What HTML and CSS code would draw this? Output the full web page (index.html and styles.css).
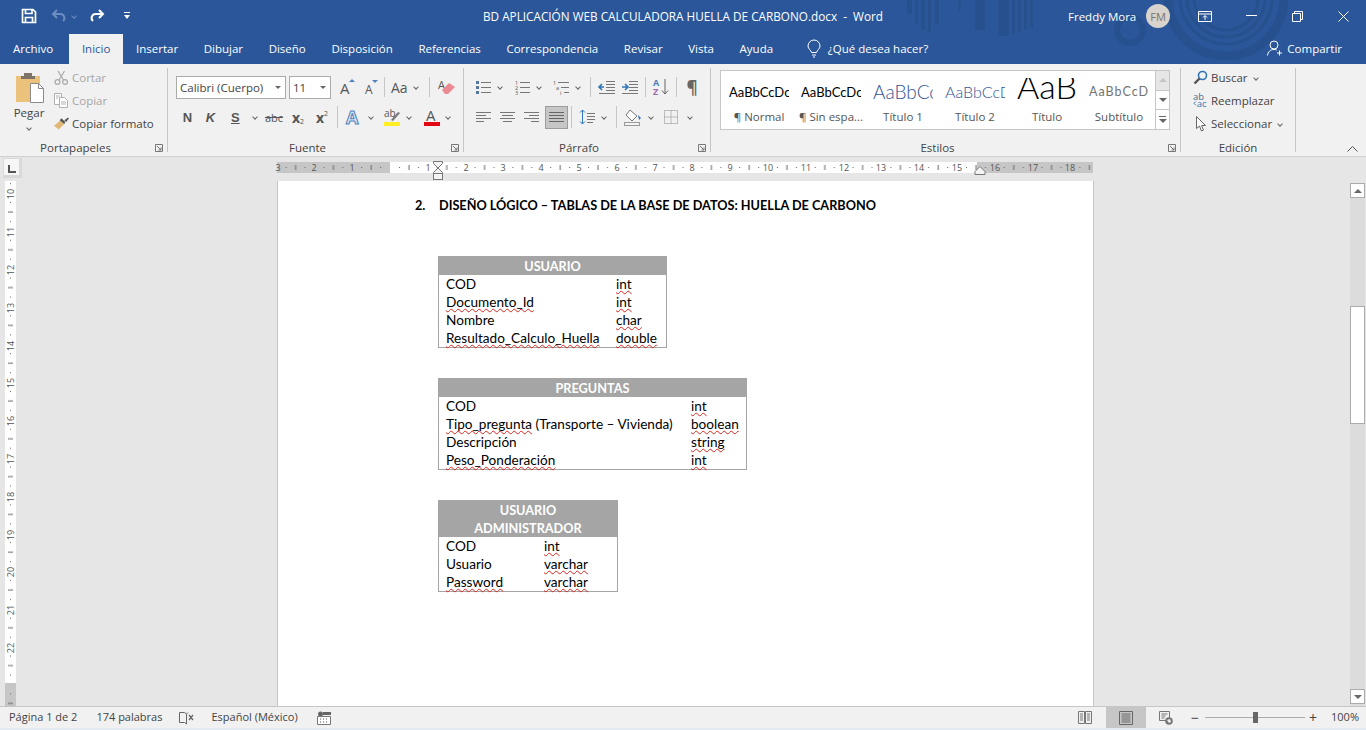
FILE: index.html
```html
<!DOCTYPE html>
<html lang="es">
<head>
  <meta charset="UTF-8" />
  <title>BD APLICACIÓN WEB CALCULADORA HUELLA DE CARBONO.docx - Word</title>
  <link rel="stylesheet" href="styles.css">
</head>
<body>
  <!-- franja azul: barra de titulo y pestañas -->
  <div class="cabecera">
    <svg class="adorno" width="1366" height="64" viewBox="0 0 1366 64">
      <g fill="#27508f">
        <rect x="907" y="0" width="5" height="14"/><rect x="915" y="0" width="3" height="24"/><rect x="921" y="0" width="4" height="30"/><rect x="928" y="0" width="3" height="32"/><rect x="935" y="0" width="4" height="24"/>
        <rect x="958" y="0" width="3" height="10"/><rect x="975" y="0" width="10" height="30"/><rect x="998" y="0" width="11" height="36"/><rect x="1012" y="0" width="3" height="34"/><rect x="1018" y="0" width="3" height="32"/><rect x="1024" y="0" width="3" height="30"/><rect x="1030" y="0" width="3" height="28"/>
      </g>
      <g fill="none" stroke="#27508f">
        <circle cx="1130" cy="30" r="13" stroke-width="6"/>
        <circle cx="1226" cy="-2" r="58" stroke-width="9"/>
        <circle cx="1226" cy="-2" r="46" stroke-width="3"/>
        <circle cx="1226" cy="-2" r="39" stroke-width="3"/>
        <circle cx="1226" cy="-2" r="32" stroke-width="3"/>
      </g>
    </svg>

    <div class="barra-titulo">
      <div class="acceso">
        <svg class="ic-guardar" width="16" height="16" viewBox="0 0 16 16" fill="none" stroke="#fff" stroke-width="1.7"><path d="M1.5 1.5h10.5l2.5 2.5v10.5h-13z"/><path d="M4.5 1.5v4h6.5v-4M4.5 14.5v-5h7v5"/></svg>
        <svg class="ic-deshacer" width="16" height="14" viewBox="0 0 16 14" fill="none" stroke="#6c8dbf" stroke-width="2"><path d="M6 1 2 5l4 4M2 5h7a4 4 0 0 1 3 7"/></svg>
        <span class="caret caret-tenue"></span>
        <svg class="ic-rehacer" width="16" height="14" viewBox="0 0 16 14" fill="none" stroke="#fff" stroke-width="2"><path d="M10 1l4 4-4 4M14 5H7a4 4 0 0 0-3 7"/></svg>
        <svg class="ic-personalizar" width="6" height="8" viewBox="0 0 6 8" fill="#fff"><rect y="0" width="6" height="1"/><path d="M0 3h6L3 7z"/></svg>
      </div>
      <div class="titulo">BD APLICACIÓN WEB CALCULADORA HUELLA DE CARBONO.docx&nbsp; -&nbsp; Word</div>
      <div class="ventana">
        <span class="usuario">Freddy Mora</span>
        <span class="avatar">FM</span>
        <svg class="ic-pantalla" width="14" height="11" viewBox="0 0 14 11" fill="none" stroke="#fff"><path d="M.5.5h13v10H.5zM.5 3h13"/><path d="M7 9V5M5 6.5l2-2 2 2"/></svg>
        <svg class="ic-min" width="11" height="2" viewBox="0 0 11 2"><rect width="11" height="1" fill="#fff"/></svg>
        <svg class="ic-res" width="11" height="11" viewBox="0 0 11 11" fill="none" stroke="#fff"><path d="M.5 2.5h8v8h-8zM2.5 2.5v-2h8v8h-2"/></svg>
        <svg class="ic-cerrar" width="11" height="11" viewBox="0 0 11 11" stroke="#fff"><path d="M.5.5l10 10M10.5.5l-10 10"/></svg>
      </div>
    </div>

    <div class="pestanas">
      <span class="pestana archivo">Archivo</span>
      <span class="pestana activa">Inicio</span>
      <span class="pestana">Insertar</span>
      <span class="pestana">Dibujar</span>
      <span class="pestana">Diseño</span>
      <span class="pestana">Disposición</span>
      <span class="pestana">Referencias</span>
      <span class="pestana">Correspondencia</span>
      <span class="pestana">Revisar</span>
      <span class="pestana">Vista</span>
      <span class="pestana">Ayuda</span>
      <svg class="ic-foco" width="14" height="18" viewBox="0 0 14 18" fill="none" stroke="#fff"><path d="M4.500 12.500C4 10 1 9 1 6a6 6 0 0 1 12 0c0 3-3 4-3.500 6.500zM5 15h4M6 17h2"/></svg>
      <span class="buscar-ayuda">¿Qué desea hacer?</span>
      <span class="compartir">
        <svg width="16" height="16" viewBox="0 0 16 16" fill="none" stroke="#fff"><circle cx="7" cy="5" r="4"/><path d="M.5 15.500c.5-4 3-6 6.500-6 1 0 2 .2 2.800.6M12.500 10.500v5M10 13h5"/></svg>
        Compartir
      </span>
    </div>
  </div>

  <!-- cinta de opciones -->
  <div class="cinta">
    <section class="grupo g-portapapeles">
      <div class="cuerpo portapapeles">
        <div class="pegar">
          <svg width="30" height="32" viewBox="0 0 30 32"><rect x="0" y="4" width="24" height="26" fill="#eac27b"/><path d="M8 4V1h8v3h3v3H5V4z" fill="#7d7466"/><path d="M14.500 11.500h8l5 5v14h-13z" fill="#fff" stroke="#8a8a8a"/><path d="M22.500 11.500v5h5" fill="none" stroke="#8a8a8a"/></svg>
          <span class="pegar-txt">Pegar</span>
          <span class="caret"></span>
        </div>
        <div class="acciones">
          <div class="accion inactiva">
            <svg width="15" height="15" viewBox="0 0 14 15" fill="none" stroke="#a9a9a9" stroke-width="1.200"><circle cx="3" cy="12" r="2.400"/><circle cx="10.500" cy="12" r="2.400"/><path d="M4.500 10 10 1M9 10 3.500 1"/></svg>
            Cortar
          </div>
          <div class="accion inactiva">
            <svg width="15" height="15" viewBox="0 0 15 15" fill="#fff" stroke="#b0b0b0"><path d="M.5.5h7v11h-7z"/><path d="M5.500 4.500h5l3 3v7h-8z"/><path d="M2 3h4M2 5h2M7 9h5M7 11h5" fill="none"/></svg>
            Copiar
          </div>
          <div class="accion">
            <svg width="15" height="15" viewBox="0 0 16 15"><path d="M0 10 7 4l4 4-6 6z" fill="#e2b878"/><path d="M6 4l2-2 4 4-1 2z" fill="#555"/><path d="M11 4l4-3 1 1-3 4z" fill="#555"/></svg>
            Copiar formato
          </div>
        </div>
      </div>
      <div class="rotulo con-lanzador">Portapapeles<svg class="lanzador" width="8" height="8" viewBox="0 0 8 8" fill="none" stroke="#777"><path d="M.5 7.500v-7h7v7zM2 2l4 4M6 3.500V6H3.500"/></svg></div>
    </section>

    <section class="grupo g-fuente">
      <div class="cuerpo filas">
        <div class="fila">
          <div class="combo c-fuente"><span>Calibri (Cuerpo)</span><i class="flecha"></i></div>
          <div class="combo c-tamano"><span>11</span><i class="flecha"></i></div>
          <svg class="b-26" width="26" height="20" viewBox="0 0 26 20"><text x="2" y="17" class="t-a" font-size="15">A</text><path d="M11 5h6l-3-3z" fill="#4f81bd"/></svg>
          <svg class="b-16" width="16" height="20" viewBox="0 0 16 20"><text x="1" y="17" class="t-a" font-size="12">A</text><path d="M8 3h6l-3 3z" fill="#4f81bd"/></svg>
          <i class="sep"></i>
          <div class="b b-36 aa"><span>Aa</span><span class="caret"></span></div>
          <i class="sep"></i>
          <svg class="b-25" width="25" height="20" viewBox="0 0 25 20"><text x="4" y="12" class="t-a" font-size="11">A</text><path d="M8 13l7-7 6 4-7 7h-3z" fill="#ec8a91"/></svg>
        </div>
        <div class="fila fila-2">
          <span class="b b-23 n">N</span>
          <span class="b b-23 k">K</span>
          <span class="b b-40 s"><u>S</u><span class="caret"></span></span>
          <span class="b b-24 tachado">abc</span>
          <span class="b b-24 indice">x<sub>2</sub></span>
          <span class="b b-24 indice">x<sup>2</sup></span>
          <i class="sep sep-n"></i>
          <span class="b b-36">
            <svg width="18" height="18" viewBox="0 0 18 18"><text x="1" y="16" class="t-fx">A</text></svg>
            <span class="caret"></span>
          </span>
          <span class="b b-40">
            <svg width="18" height="18" viewBox="0 0 18 18"><text x="1" y="9" class="t-a" font-size="10">ab</text><path d="M8 12l7-8 2 1-7 8z" fill="#777"/><rect x="1" y="14" width="16" height="4" fill="#ffee22"/></svg>
            <span class="caret"></span>
          </span>
          <span class="b b-39">
            <svg width="16" height="18" viewBox="0 0 16 18"><text x="2" y="13" class="t-a" font-size="15">A</text><rect x="0" y="14" width="16" height="4" fill="#e30613"/></svg>
            <span class="caret"></span>
          </span>
        </div>
      </div>
      <div class="rotulo con-lanzador">Fuente<svg class="lanzador" width="8" height="8" viewBox="0 0 8 8" fill="none" stroke="#777"><path d="M.5 7.500v-7h7v7zM2 2l4 4M6 3.500V6H3.500"/></svg></div>
    </section>

    <section class="grupo g-parrafo">
      <div class="cuerpo filas">
        <div class="fila fila-par">
          <span class="ip b-39">
            <svg width="15" height="15" viewBox="0 0 15 15"><path d="M5 2.500h10M5 7.500h10M5 12.500h10" stroke="#777"/><path d="M0 1h3v3H0zM0 6h3v3H0zM0 11h3v3H0z" fill="#56779e"/></svg>
            <span class="caret"></span>
          </span>
          <span class="ip b-38">
            <svg width="15" height="15" viewBox="0 0 15 15"><path d="M5 2.500h10M5 7.500h10M5 12.500h10" stroke="#777"/><text x="0" y="5" class="t-num">1</text><text x="0" y="10" class="t-num">2</text><text x="0" y="15" class="t-num">3</text></svg>
            <span class="caret"></span>
          </span>
          <span class="ip b-36">
            <svg width="16" height="15" viewBox="0 0 16 15"><path d="M5 2.500h11M8 7.500h8M11 12.500h5" stroke="#777"/><text x="0" y="5" class="t-num">1</text><text x="3" y="10" class="t-num">a</text><text x="7" y="15" class="t-num">i</text></svg>
            <span class="caret"></span>
          </span>
          <i class="sep"></i>
          <svg class="sangria" width="17" height="15" viewBox="0 0 17 15" fill="none" stroke="#777"><path d="M8 1.500h9M8 4.500h9M8 7.500h9M8 10.500h9M1 13.500h16"/><path d="M6 7H1M4 4 1 7l3 3" stroke="#2e75b6" stroke-width="1.600"/></svg>
          <svg class="sangria" width="17" height="15" viewBox="0 0 17 15" fill="none" stroke="#777"><path d="M8 1.500h9M8 4.500h9M8 7.500h9M8 10.500h9M1 13.500h16"/><path d="M1 7h5M4 4l3 3-3 3" stroke="#2e75b6" stroke-width="1.600"/></svg>
          <i class="sep"></i>
          <svg class="orden" width="16" height="18" viewBox="0 0 16 18"><text x="0" y="8" class="t-az" fill="#4f81bd">A</text><text x="0" y="17" class="t-az" fill="#a26ab0">Z</text><path d="M12 1v15M9 12.500l3 3.500 3-3.500" fill="none" stroke="#666"/></svg>
          <i class="sep"></i>
          <span class="b b-24 calderon">¶</span>
        </div>
        <div class="fila fila-par fila-2 fila-alinear">
          <svg class="al" width="15" height="10" viewBox="0 0 15 10" stroke="#777"><path d="M0 .5h15M0 3.500h10M0 6.500h15M0 9.500h8"/></svg>
          <svg class="al" width="15" height="10" viewBox="0 0 15 10" stroke="#777"><path d="M0 .5h15M2 3.500h11M0 6.500h15M3 9.500h9"/></svg>
          <svg class="al al-ult" width="15" height="10" viewBox="0 0 15 10" stroke="#777"><path d="M0 .5h15M5 3.500h10M0 6.500h15M7 9.500h8"/></svg>
          <span class="b activo">
            <svg width="15" height="10" viewBox="0 0 15 10" stroke="#666"><path d="M0 .5h15M0 3.500h15M0 6.500h15M0 9.500h15"/></svg>
          </span>
          <i class="sep sep-n"></i>
          <span class="ip ip-4 b-38">
            <svg width="16" height="16" viewBox="0 0 16 16" fill="none"><path d="M8 4.500h8M8 7.500h8M8 10.500h8M8 13.500h6" stroke="#777"/><path d="M3.500 1v14M1 3.500 3.500 1 6 3.500M1 12.500 3.500 15 6 12.500" stroke="#2e75b6"/></svg>
            <span class="caret"></span>
          </span>
          <i class="sep sep-n"></i>
          <span class="ip ip-4 b-40">
            <svg width="18" height="17" viewBox="0 0 18 17"><path d="M6 1l7 6-5 5-6-6z" fill="#fff" stroke="#777"/><path d="M14 6l3 3-2 2z" fill="#2e75b6"/><rect x=".5" y="13.500" width="15" height="3" fill="#f4f4f4" stroke="#999"/></svg>
            <span class="caret"></span>
          </span>
          <span class="ip ip-4 ip-ancho b-36">
            <svg width="14" height="14" viewBox="0 0 14 14" fill="none" stroke="#888" stroke-dasharray="1 1"><path d="M.5.500h13v13H.5zM7 .5v13M.5 7h13"/></svg>
            <span class="caret"></span>
          </span>
        </div>
      </div>
      <div class="rotulo con-lanzador">Párrafo<svg class="lanzador" width="8" height="8" viewBox="0 0 8 8" fill="none" stroke="#777"><path d="M.5 7.500v-7h7v7zM2 2l4 4M6 3.500V6H3.500"/></svg></div>
    </section>

    <section class="grupo g-estilos">
      <div class="cuerpo">
        <div class="galeria">
          <div class="estilo"><div class="muestra m-normal">AaBbCcDc</div><div class="nombre">¶ Normal</div></div>
          <div class="estilo"><div class="muestra m-normal">AaBbCcDc</div><div class="nombre">¶ Sin espa...</div></div>
          <div class="estilo"><div class="muestra m-t1">AaBbCc</div><div class="nombre">Título 1</div></div>
          <div class="estilo"><div class="muestra m-t2">AaBbCcD</div><div class="nombre">Título 2</div></div>
          <div class="estilo"><div class="muestra m-titulo">AaB</div><div class="nombre">Título</div></div>
          <div class="estilo"><div class="muestra m-sub">AaBbCcD</div><div class="nombre">Subtítulo</div></div>
          <div class="galeria-scroll">
            <span class="gs gs-off"><i class="tri-arr"></i></span>
            <span class="gs"><i class="tri-aba"></i></span>
            <span class="gs gs-mas"><i class="raya"></i><i class="tri-aba"></i></span>
          </div>
        </div>
      </div>
      <div class="rotulo con-lanzador">Estilos<svg class="lanzador" width="8" height="8" viewBox="0 0 8 8" fill="none" stroke="#777"><path d="M.5 7.500v-7h7v7zM2 2l4 4M6 3.500V6H3.500"/></svg></div>
    </section>

    <section class="grupo g-edicion">
      <div class="cuerpo acciones acciones-ed">
        <div class="accion">
          <svg width="15" height="15" viewBox="0 0 15 15" fill="none"><circle cx="9.500" cy="5.500" r="4" stroke="#2e75b6" stroke-width="1.600"/><path d="M6.500 8.500l-5 5" stroke="#555" stroke-width="2.400"/></svg>
          Buscar<span class="caret caret-buscar"></span>
        </div>
        <div class="accion">
          <svg width="15" height="15" viewBox="0 0 16 16"><text x="0" y="7" class="t-rem">ab</text><text x="4" y="15" class="t-rem t-azul">ac</text><path d="M3 9 1 11l2 2" fill="none" stroke="#2e75b6"/></svg>
          Reemplazar
        </div>
        <div class="accion">
          <svg width="15" height="16" viewBox="0 0 15 16" fill="#fff" stroke="#666"><path d="M3.500.5v12l3-2.500 2 5 2-1-2-4.500h4z"/></svg>
          Seleccionar<span class="caret"></span>
        </div>
      </div>
      <div class="rotulo">Edición</div>
    </section>

    <svg class="contraer" width="11" height="6" viewBox="0 0 11 6" fill="none" stroke="#555"><path d="M.5 5.500l5-5 5 5"/></svg>
  </div>

  <!-- area de trabajo -->
  <div class="trabajo">
    <div class="esquina"><span class="tab-l"></span></div>

    <svg class="regla-h" width="817" height="24" viewBox="0 0 817 24">
      <defs>
        <pattern id="marcas-h" width="37.8" height="24" patternUnits="userSpaceOnUse" patternTransform="translate(113 0)">
          <rect x="9" y="10" width="1" height="1" fill="#666"/>
          <rect x="18.500" y="8" width="1" height="5" fill="#666"/>
          <rect x="28" y="10" width="1" height="1" fill="#666"/>
        </pattern>
      </defs>
      <rect x="0" y="5" width="113" height="11" fill="#c6c6c6"/>
      <rect x="113" y="5" width="587" height="11" fill="#fff"/>
      <rect x="700" y="5" width="116" height="11" fill="#c6c6c6"/>
      <rect x="0" y="5" width="816" height="11" fill="url(#marcas-h)"/>
      <g class="t-regla" text-anchor="middle">
        <text x="1" y="14">3</text><text x="37" y="14">2</text><text x="75" y="14">1</text>
        <text x="151" y="14">1</text><text x="189" y="14">2</text><text x="226" y="14">3</text><text x="264" y="14">4</text><text x="302" y="14">5</text><text x="340" y="14">6</text><text x="378" y="14">7</text><text x="415" y="14">8</text><text x="453" y="14">9</text><text x="491" y="14">10</text><text x="529" y="14">11</text><text x="567" y="14">12</text><text x="604" y="14">13</text><text x="642" y="14">14</text><text x="680" y="14">15</text><text x="718" y="14">16</text><text x="756" y="14">17</text><text x="793" y="14">18</text>
      </g>
      <g fill="#f4f4f4" stroke="#777">
        <path d="M156.500 4.500h9v2l-4.500 4.500-4.500-4.500z"/>
        <path d="M161 11l4.500 4.500v1h-9v-1z"/>
        <rect x="156.500" y="16.500" width="9" height="6"/>
        <path d="M698 17.500v-3l5-5 5 5v3z"/>
      </g>
    </svg>

    <div class="lado">
      <svg class="regla-v" width="11" height="525" viewBox="0 0 11 525">
        <defs>
          <pattern id="marcas-v" width="11" height="37.8" patternUnits="userSpaceOnUse" patternTransform="translate(0 12)">
            <rect x="5" y="9" width="1" height="1" fill="#666"/>
            <rect x="3" y="18.500" width="5" height="1" fill="#666"/>
            <rect x="5" y="28" width="1" height="1" fill="#666"/>
          </pattern>
        </defs>
        <rect width="11" height="502" fill="#fff"/>
        <rect y="502" width="11" height="23" fill="#c6c6c6"/>
        <rect width="11" height="525" fill="url(#marcas-v)"/>
        <g class="t-regla" text-anchor="middle">
          <text transform="translate(9 13) rotate(-90)">10</text>
          <text transform="translate(9 51) rotate(-90)">11</text>
          <text transform="translate(9 89) rotate(-90)">12</text>
          <text transform="translate(9 127) rotate(-90)">13</text>
          <text transform="translate(9 165) rotate(-90)">14</text>
          <text transform="translate(9 202) rotate(-90)">15</text>
          <text transform="translate(9 240) rotate(-90)">16</text>
          <text transform="translate(9 278) rotate(-90)">17</text>
          <text transform="translate(9 316) rotate(-90)">18</text>
          <text transform="translate(9 354) rotate(-90)">19</text>
          <text transform="translate(9 391) rotate(-90)">20</text>
          <text transform="translate(9 429) rotate(-90)">21</text>
          <text transform="translate(9 467) rotate(-90)">22</text>
        </g>
      </svg>
    </div>

    <div class="pagina">
      <h2 class="doc-titulo"><span class="doc-num">2.</span>DISEÑO LÓGICO – TABLAS DE LA BASE DE DATOS: HUELLA DE CARBONO</h2>

      <table class="tabla t-usuario">
        <colgroup><col class="col-a"><col></colgroup>
        <tr><th colspan="2">USUARIO</th></tr>
        <tr><td>COD</td><td><span class="err">int</span></td></tr>
        <tr><td><span class="err">Documento_Id</span></td><td><span class="err">int</span></td></tr>
        <tr><td>Nombre</td><td><span class="err">char</span></td></tr>
        <tr><td><span class="err">Resultado_Calculo_Huella</span></td><td><span class="err">double</span></td></tr>
      </table>

      <table class="tabla t-preguntas">
        <colgroup><col class="col-a"><col></colgroup>
        <tr><th colspan="2">PREGUNTAS</th></tr>
        <tr><td>COD</td><td><span class="err">int</span></td></tr>
        <tr><td><span class="err">Tipo_pregunta</span> (Transporte – Vivienda)</td><td><span class="err">boolean</span></td></tr>
        <tr><td>Descripción</td><td><span class="err">string</span></td></tr>
        <tr><td><span class="err">Peso_Ponderación</span></td><td><span class="err">int</span></td></tr>
      </table>

      <table class="tabla t-admin">
        <colgroup><col class="col-a"><col></colgroup>
        <tr><th colspan="2">USUARIO<br>ADMINISTRADOR</th></tr>
        <tr><td>COD</td><td><span class="err">int</span></td></tr>
        <tr><td>Usuario</td><td><span class="err">varchar</span></td></tr>
        <tr><td><span class="err">Password</span></td><td><span class="err">varchar</span></td></tr>
      </table>
    </div>

    <div class="vacio"></div>

    <div class="scroll">
      <span class="scroll-btn"><i class="tri-arr"></i></span>
      <span class="scroll-arriba"></span>
      <span class="scroll-pulgar"></span>
      <span class="scroll-abajo"></span>
      <span class="scroll-btn"><i class="tri-aba"></i></span>
    </div>
  </div>

  <!-- barra de estado -->
  <div class="estado">
    <span class="e-pagina">Página 1 de 2</span>
    <span class="e-palabras">174 palabras</span>
    <svg class="e-libro" width="15" height="14" viewBox="0 0 15 14" fill="none" stroke="#666"><path d="M.5 1.500h5l2 1.500v10l-2-1.500h-5zM7.500 3l1.500-1.500"/><path d="M10 4l4 5M14 4l-4 5" stroke-width="1.300"/></svg>
    <span class="e-idioma">Español (México)</span>
    <svg class="e-macro" width="14" height="14" viewBox="0 0 14 14"><circle cx="3.500" cy="3" r="2.500" fill="#666"/><rect x="6" y="1" width="8" height="3" fill="#666"/><path d="M.5 5.500h13v8H.5z" fill="#fff" stroke="#777"/><path d="M3 8h1M6 8h1M9 8h1M3 11h1M6 11h1M9 11h1" stroke="#555"/></svg>
    <span class="e-derecha">
      <svg class="e-lectura" width="14" height="14" viewBox="0 0 14 14" fill="none" stroke="#777"><path d="M.5.500h6v12h-6zM7.500.500h6v12h-6zM2 3h3M2 5h3M2 7h3M2 9h3M9 3h3M9 5h3M9 7h3M9 9h3"/></svg>
      <span class="e-vista">
        <svg width="14" height="14" viewBox="0 0 14 14" fill="none" stroke="#666"><path d="M.5.500h13v13H.5zM2.500 3h9M2.500 5h9M2.500 7h9M2.500 9h9M2.500 11h9"/></svg>
      </span>
      <svg class="e-web" width="14" height="14" viewBox="0 0 14 14"><path d="M.5.500h10v9H.5zM2.500 3h6M2.500 5h4M2.500 7h3" fill="none" stroke="#777"/><circle cx="10" cy="10" r="3.800" fill="#777"/><path d="M8 9l3-1 1 3-2 1z" fill="#eee"/></svg>
      <span class="zoom-signo">−</span>
      <span class="zoom-pista"><i class="zoom-pulgar"></i></span>
      <span class="zoom-signo">+</span>
      <span class="zoom-pct">100%</span>
    </span>
  </div>
</body>
</html>
```

FILE: styles.css
```css
* {
  box-sizing: border-box;
}

html, body {
  margin: 0;
  height: 730px;
  overflow: hidden;
}

body {
  display: flex;
  flex-direction: column;
  font-family: "Open Sans", sans-serif;
  font-size: 11.5px;
  color: #444;
  background-color: #e6e6e6;
}

svg {
  display: block;
  flex: none;
  overflow: visible;
}

i {
  display: block;
  font-style: normal;
}

.caret {
  display: inline-block;
  width: 4px;
  height: 4px;
  border-right: 1px solid #666;
  border-bottom: 1px solid #666;
  transform: rotate(45deg);
  flex: none;
}

.caret-tenue {
  border-color: #6c8dbf;
}

/* cabecera azul */
.cabecera {
  position: relative;
  height: 64px;
  background-color: #2b579a;
  color: #fff;
  overflow: hidden;
}

.adorno {
  position: absolute;
  left: 0;
  top: 0;
}

.barra-titulo {
  position: relative;
  display: flex;
  align-items: center;
  height: 32px;
  margin-bottom: 2px;
}

.acceso {
  display: flex;
  align-items: center;
  width: 400px;
  padding-left: 21px;
}

.ic-deshacer {
  margin-left: 14px;
}

.caret-tenue {
  margin-left: 5px;
}

.ic-rehacer {
  margin-left: 13px;
}

.ic-personalizar {
  margin-left: 19px;
}

.titulo {
  width: 566px;
  font-size: 11.75px;
  text-align: center;
  white-space: nowrap;
}

.ventana {
  display: flex;
  align-items: center;
  flex: 1;
  padding-left: 102px;
}

.usuario {
  width: 78px;
}

.avatar {
  display: flex;
  align-items: center;
  justify-content: center;
  width: 24px;
  height: 24px;
  border-radius: 50%;
  background-color: #d9d3cd;
  color: #7a7470;
  font-size: 11px;
}

.ic-pantalla {
  margin-left: 28px;
}

.ic-min {
  margin-left: 34px;
}

.ic-res {
  margin-left: 35px;
}

.ic-cerrar {
  margin-left: 35px;
}

.pestanas {
  position: relative;
  display: flex;
  align-items: stretch;
  height: 30px;
}

.pestana {
  display: flex;
  align-items: center;
  padding: 0 12.8px 1px;
}

.archivo {
  padding: 0 16px 2px 13px;
}

.activa {
  background-color: #f1f1f1;
  color: #2b579a;
}

.ic-foco {
  align-self: center;
  margin-left: 21px;
}

.buscar-ayuda {
  align-self: center;
  margin: 0 0 2px 7px;
}

.compartir {
  display: flex;
  align-items: center;
  gap: 4px;
  margin-left: auto;
  margin-right: 24px;
  padding-bottom: 2px;
}

/* cinta */
.cinta {
  position: relative;
  display: flex;
  height: 93px;
  padding-top: 4px;
  background-color: #f1f1f1;
  border-bottom: 1px solid #d0d0d0;
}

.grupo {
  display: flex;
  flex-direction: column;
  height: 84px;
  border-right: 1px solid #c6c6c6;
}

.g-portapapeles {
  width: 168px;
}

.g-fuente {
  width: 296px;
}

.g-parrafo {
  width: 247px;
}

.g-estilos {
  width: 470px;
}

.g-edicion {
  width: 115px;
}

.cuerpo {
  flex: 1;
}

.rotulo {
  position: relative;
  height: 14px;
  margin-bottom: -3px;
  line-height: 14px;
  text-align: center;
  color: #444;
}

.con-lanzador {
  padding-right: 16px;
}

.lanzador {
  position: absolute;
  right: 4px;
  top: 3px;
}

.portapapeles {
  display: flex;
}

.pegar {
  display: flex;
  flex-direction: column;
  align-items: center;
  width: 54px;
  padding: 4px 0 0 4px;
}

.pegar svg {
  margin-left: 4px;
}

.pegar-txt {
  margin-top: 1px;
}

.pegar .caret {
  margin-top: 6px;
}

.acciones {
  display: flex;
  flex-direction: column;
  margin-top: -2px;
}

.accion {
  display: flex;
  align-items: center;
  gap: 3px;
  height: 23px;
  white-space: nowrap;
}

.inactiva {
  color: #a6a6a6;
}

.acciones-ed {
  padding-left: 12px;
}

.caret-buscar {
  margin-left: 18px;
}

.accion .caret {
  margin-left: 3px;
}

.g-fuente .filas {
  padding: 7px 0 0 8px;
}

.g-parrafo .filas {
  padding: 8px 0 0 9px;
}

.fila {
  display: flex;
  align-items: center;
  height: 24px;
}

.fila-2 {
  margin-top: 6px;
}

.fila-par {
  height: 22px;
}

.fila-par.fila-2 {
  margin-top: 8px;
}

.combo {
  display: flex;
  align-items: center;
  justify-content: space-between;
  height: 23px;
  padding: 0 4px 0 3px;
  background-color: #fff;
  border: 1px solid #ababab;
  white-space: nowrap;
}

.c-fuente {
  width: 110px;
  margin-right: 3px;
}

.c-tamano {
  width: 42px;
  margin-right: 7px;
}

.flecha {
  width: 0;
  height: 0;
  border-left: 3px solid transparent;
  border-right: 3px solid transparent;
  border-top: 3px solid #666;
}

.b {
  display: flex;
  align-items: center;
  justify-content: center;
  flex: none;
  gap: 6px;
}

/* icono con flecha, alineado a la izquierda */
.ip {
  display: flex;
  align-items: center;
  flex: none;
  gap: 7px;
  padding-left: 3px;
}

.ip-4 {
  padding-left: 4px;
}

.ip-ancho {
  gap: 10px;
}

.b-16 { width: 16px; }
.b-23 { width: 23px; }
.b-24 { width: 24px; }
.b-25 { width: 25px; }
.b-26 { width: 26px; }
.b-36 { width: 36px; }
.b-38 { width: 38px; }
.b-39 { width: 39px; }
.b-40 { width: 40px; }

.sangria {
  margin: 0 3px;
}

.orden {
  width: 22px;
}

.fila-alinear {
  padding-left: 3px;
}

.al {
  margin-right: 9px;
}

.al-ult {
  margin-right: 6px;
}

.sep {
  width: 1px;
  height: 20px;
  margin: 0 4px;
  background-color: #c6c6c6;
  flex: none;
}

.sep-n {
  height: 22px;
  margin: 0 3px;
}

.aa {
  justify-content: flex-start;
  padding-left: 2px;
}

.aa span:first-child {
  font-size: 14px;
  color: #555;
}

.n, .k, .s {
  font-family: "Liberation Sans", sans-serif;
  font-weight: bold;
  font-size: 13px;
  color: #555;
}

.k {
  font-style: italic;
}

.s {
  justify-content: flex-start;
  padding-left: 9px;
  gap: 13px;
}

.tachado {
  font-size: 11px;
  text-decoration: line-through;
  color: #555;
}

.indice {
  gap: 0;
  font-weight: bold;
  font-size: 14px;
  color: #555;
}

.indice sub, .indice sup {
  position: relative;
  font-size: 7px;
  font-weight: normal;
}

.indice sub {
  top: 4px;
}

.indice sup {
  top: -4px;
}

.calderon {
  margin-left: -1px;
  font-size: 17px;
  font-weight: bold;
  color: #666;
}

.t-a {
  font-family: "Open Sans", sans-serif;
  fill: #555;
}

.t-fx {
  font-family: "Open Sans", sans-serif;
  font-size: 18px;
  font-weight: bold;
  fill: #dbe8f7;
  stroke: #4f81bd;
  stroke-width: 1;
}

.t-num {
  font-size: 5.5px;
  fill: #555;
}

.t-az {
  font-size: 9px;
  font-weight: bold;
}

.t-rem {
  font-size: 10px;
  fill: #44678c;
}

.t-azul {
  fill: #2e75b6;
}

.activo {
  width: 23px;
  height: 23px;
  background-color: #c6c6c6;
  border: 1px solid #9c9c9c;
}

/* galeria de estilos */
.galeria {
  display: flex;
  height: 60px;
  margin: 2px 0 0 9px;
  width: 450px;
  padding-left: 2px;
  background-color: #fff;
  border: 1px solid #c6c6c6;
}

.estilo {
  width: 72px;
  padding-top: 1px;
  text-align: center;
  flex: none;
}

.muestra {
  height: 37px;
  width: 60px;
  margin: 0 auto;
  overflow: hidden;
  font-family: Lato, sans-serif;
  line-height: 40px;
  white-space: nowrap;
  color: #000;
  text-align: left;
}

.m-normal {
  font-size: 13px;
}

.m-t1 {
  font-size: 19px;
  font-weight: 300;
  color: #2f5496;
}

.m-t2 {
  font-size: 16px;
  font-weight: 300;
  color: #2f5496;
}

/* el Titulo sale cortado por arriba en la galeria */
.m-titulo {
  height: 31px;
  margin-top: 6px;
  font-size: 34px;
  font-weight: 300;
  line-height: 16px;
}

.m-sub {
  font-size: 12.5px;
  letter-spacing: 1px;
  color: #737373;
}

.nombre {
  color: #555;
}

.galeria-scroll {
  display: flex;
  flex-direction: column;
  width: 15px;
  margin-left: auto;
  border-left: 1px solid #c6c6c6;
}

.gs {
  display: flex;
  flex-direction: column;
  align-items: center;
  justify-content: center;
  gap: 2px;
  flex: 1;
  border-top: 1px solid #c6c6c6;
}

.gs:first-child {
  border-top: 0;
}

.gs-off {
  background-color: #e6e6e6;
}

.gs-off .tri-arr {
  border-bottom-color: #c6c6c6;
}

.raya {
  width: 7px;
  height: 1px;
  background-color: #666;
}

.tri-arr {
  width: 0;
  height: 0;
  border-left: 4px solid transparent;
  border-right: 4px solid transparent;
  border-bottom: 4px solid #666;
}

.tri-aba {
  width: 0;
  height: 0;
  border-left: 4px solid transparent;
  border-right: 4px solid transparent;
  border-top: 4px solid #666;
}

.contraer {
  position: absolute;
  right: 8px;
  top: 82px;
}

/* area de trabajo */
.trabajo {
  flex: 1;
  min-height: 0;
  display: grid;
  grid-template-columns: 277px 817px 256px 16px;
  grid-template-rows: 24px 525px;
}

.esquina {
  position: relative;
  width: 19px;
  height: 20px;
  margin: 1px 0 0 3px;
  background-color: #d9d9d9;
}

.tab-l {
  position: absolute;
  left: 1px;
  top: 1px;
  width: 15px;
  height: 16px;
  background-color: #f6f6f6;
}

.tab-l::after {
  content: "";
  position: absolute;
  left: 4px;
  top: 6px;
  width: 6px;
  height: 6px;
  border-left: 2px solid #555;
  border-bottom: 2px solid #555;
}

.regla-h {
  grid-column: 2 / span 3;
}

.t-regla {
  font-size: 9px;
  fill: #555;
}

.lado {
  padding-left: 5px;
}

.pagina {
  background-color: #fff;
  border-left: 1px solid #c6c6c6;
  border-right: 1px solid #c6c6c6;
  padding: 15px 0 0 137px;
  font-family: Lato, sans-serif;
  font-size: 13.6px;
  line-height: 18px;
  color: #000;
  overflow: hidden;
}

.doc-titulo {
  display: flex;
  height: 18px;
  margin: 0 0 42px;
  font-size: 12.7px;
  line-height: 18px;
  font-weight: bold;
  white-space: nowrap;
}

.doc-num {
  width: 24px;
}

.tabla {
  margin: 0 0 30px 23px;
  border-collapse: separate;
  border-spacing: 0;
  border: 1px solid #a5a5a5;
  table-layout: fixed;
}

.tabla th {
  height: 18px;
  padding: 0;
  background-color: #a5a5a5;
  color: #fff;
  font-size: 12.7px;
  font-weight: bold;
  text-align: center;
}

.tabla td {
  height: 18px;
  padding: 0 0 0 7px;
  white-space: nowrap;
}

.t-usuario {
  width: 229px;
}

.t-usuario .col-a {
  width: 170px;
}

.t-preguntas {
  width: 309px;
}

.t-preguntas .col-a {
  width: 245px;
}

.t-admin {
  width: 180px;
}

.t-admin .col-a {
  width: 98px;
}

.err {
  text-decoration: underline wavy #d9261c;
  text-decoration-thickness: 1px;
  text-decoration-skip-ink: none;
  text-underline-offset: 1px;
}

.scroll {
  display: flex;
  flex-direction: column;
  width: 15px;
  margin-top: 2px;
  background-color: #dcdcdc;
}

.scroll-btn {
  display: flex;
  align-items: center;
  justify-content: center;
  height: 15px;
  background-color: #fff;
  border: 1px solid #ababab;
  flex: none;
}

.scroll-arriba {
  height: 108px;
}

.scroll-pulgar {
  height: 118px;
  background-color: #fff;
  border: 1px solid #ababab;
}

.scroll-abajo {
  flex: 1;
}

.scroll .scroll-btn:last-child {
  margin-bottom: 2px;
}

/* barra de estado */
.estado {
  position: relative;
  display: flex;
  align-items: center;
  height: 24px;
  padding-left: 9px;
  font-size: 11px;
  background-color: #f1f1f1;
  border-top: 1px solid #c6c6c6;
  border-bottom: 2px solid #e3ebf0;
}

.e-pagina, .e-palabras, .e-idioma {
  padding-bottom: 2px;
}

.e-palabras {
  margin-left: 19px;
}

.e-libro {
  margin-left: 17px;
}

.e-idioma {
  margin-left: 17px;
}

.e-macro {
  margin-left: 19px;
}

.e-derecha {
  display: flex;
  align-items: center;
  align-self: stretch;
  margin-left: auto;
  padding-right: 7px;
}

.e-vista {
  display: flex;
  align-items: center;
  justify-content: center;
  align-self: stretch;
  width: 40px;
  margin: 0 13px 0 14px;
  background-color: #c6c6c6;
}

.zoom-signo {
  width: 8px;
  margin-left: 18px;
  font-size: 14px;
  line-height: 14px;
  text-align: center;
}

.zoom-pista {
  position: relative;
  width: 100px;
  height: 1px;
  margin: 0 4px 0 6px;
  background-color: #ababab;
}

.zoom-pista + .zoom-signo {
  margin-left: 0;
}

.zoom-pulgar {
  position: absolute;
  left: 48px;
  top: -5px;
  width: 5px;
  height: 11px;
  background-color: #666;
}

.zoom-pct {
  margin-left: 14px;
  padding-bottom: 2px;
}
```
